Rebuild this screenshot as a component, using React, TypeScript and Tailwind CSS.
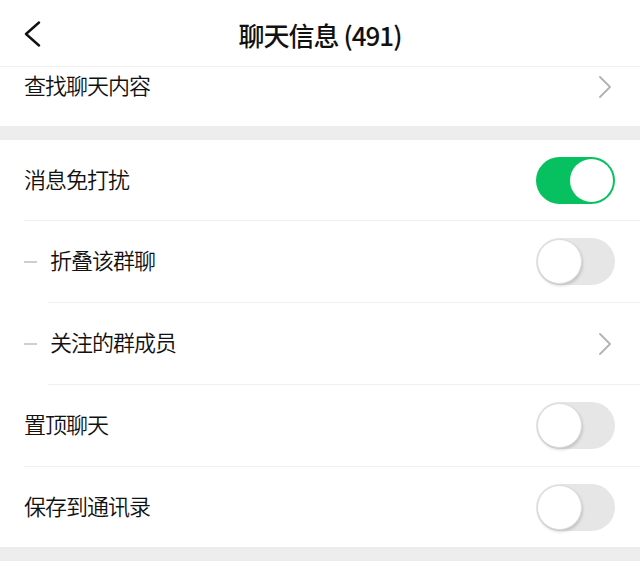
import React from "react";

const font = {
  fontFamily: '"Liberation Sans", "Noto Sans CJK SC", sans-serif',
};

function Chevron() {
  return (
    <svg width="14" height="22" viewBox="0 0 14 22" fill="none">
      <polyline
        points="2,1 12,11 2,21"
        stroke="#b2b2b2"
        strokeWidth="1.8"
        strokeLinecap="round"
        strokeLinejoin="round"
      />
    </svg>
  );
}

function Toggle({ on }: { on: boolean }) {
  if (on) {
    return (
      <div className="w-[79px] h-[47px] rounded-full bg-[#07c160] flex items-center justify-end p-[2px]">
        <div className="w-[43px] h-[43px] rounded-full bg-white" />
      </div>
    );
  }
  return (
    <div className="w-[79px] h-[47px] rounded-full bg-[#e6e6e6] flex items-center justify-start p-[1px]">
      <div className="w-[45px] h-[45px] rounded-full bg-white border border-[#dcdcdc] shadow-[1px_2px_3px_rgba(0,0,0,0.15)]" />
    </div>
  );
}

function Label({ children }: { children: React.ReactNode }) {
  return (
    <span className="flex-1 text-[22px] font-[350] text-[#111111] tracking-[-1px]">
      {children}
    </span>
  );
}

function Row({
  label,
  sub,
  right,
  h,
}: {
  label: string;
  sub?: boolean;
  right: React.ReactNode;
  h: string;
}) {
  return (
    <div className={`flex items-center ${h} pl-[24px] pr-[25px]`}>
      {sub && <div className="w-[13px] h-[2px] bg-[#cfcfcf] mr-[13px]" />}
      <Label>{label}</Label>
      {right}
    </div>
  );
}

function Divider({ indent }: { indent: string }) {
  return <div className={`h-px bg-[#efefef] ${indent}`} />;
}

export default function App() {
  return (
    <div className="w-[640px] h-[566px] bg-white overflow-hidden" style={font}>
      <div className="relative h-[66px] flex items-center justify-center">
        <svg
          className="absolute left-[24px] top-[21px]"
          width="18"
          height="26"
          viewBox="0 0 18 26"
          fill="none"
        >
          <polyline
            points="15,1.5 2,13 15,24.5"
            stroke="#111"
            strokeWidth="2.4"
            strokeLinecap="round"
            strokeLinejoin="round"
          />
        </svg>
        <span
          className="text-[26px] font-medium text-[#111111] tracking-[-1px] pt-[2px]"
          style={{ fontFamily: '"Noto Sans CJK SC", sans-serif' }}
        >
          聊天信息 (491)
        </span>
      </div>
      <div className="h-px bg-[#f0f0f0]" />
      <div className="flex items-center h-[59px] pl-[24px] pr-[28px] pb-[20px]">
        <Label>查找聊天内容</Label>
        <Chevron />
      </div>
      <div className="h-[14px] bg-[#ededed]" />

      <Row h="h-[80px]" label="消息免打扰" right={<Toggle on />} />
      <Divider indent="ml-[24px]" />
      <Row h="h-[81px]" sub label="折叠该群聊" right={<Toggle on={false} />} />
      <Divider indent="ml-[48px]" />
      <Row
        h="h-[81px]"
        sub
        label="关注的群成员"
        right={
          <div className="pr-[3px]">
            <Chevron />
          </div>
        }
      />
      <Divider indent="ml-[48px]" />
      <Row h="h-[81px]" label="置顶聊天" right={<Toggle on={false} />} />
      <Divider indent="ml-[24px]" />
      <Row h="h-[80px]" label="保存到通讯录" right={<Toggle on={false} />} />
      <div className="h-[14px] bg-[#ededed]" />
    </div>
  );
}
